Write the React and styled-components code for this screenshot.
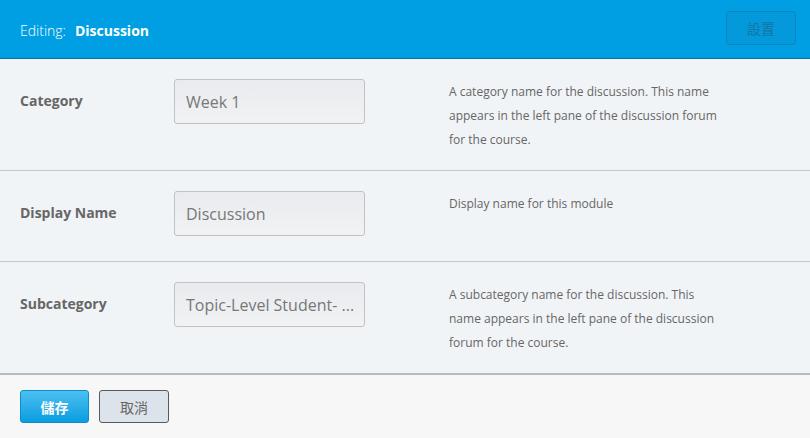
import styled, { createGlobalStyle } from "styled-components";

const GlobalStyle = createGlobalStyle`
  html, body {
    margin: 0;
    padding: 0;
    background: #f7f7f7;
  }
  body {
    font-family: "Open Sans", "Noto Sans CJK TC", sans-serif;
  }
`;

const Page = styled.div`
  width: 810px;
  height: 438px;
  display: flex;
  flex-direction: column;
  overflow: hidden;
`;

const Header = styled.div`
  height: 58px;
  background: #009fe3;
  border-bottom: 1px solid #0b6f9d;
  display: flex;
  align-items: center;
  justify-content: space-between;
  padding: 0 14px 0 20px;
  box-sizing: content-box;
`;

const Title = styled.div`
  color: #fff;
  font-size: 14px;
  font-weight: 300;
  line-height: 20px;
  padding-top: 3px;

  b {
    font-weight: 700;
    margin-left: 9px;
  }
`;

const SettingsButton = styled.button`
  width: 70px;
  height: 34px;
  margin-top: -3px;
  border: 1px solid #0f84b9;
  border-radius: 3px;
  background: #0399da;
  color: #1475a6;
  font-family: "Noto Sans CJK TC", sans-serif;
  font-size: 14px;
  padding: 0;
`;

const Body = styled.div`
  background: #f1f4f7;
  border-bottom: 2px solid #b9b9b9;
`;

const Row = styled.div`
  display: flex;
  align-items: flex-start;
  padding: 20px 20px 19px;
  border-top: ${(p) => (p.first ? "none" : "1px solid #c4c7ca")};
`;

const Label = styled.div`
  width: 154px;
  height: 42px;
  display: flex;
  align-items: center;
  color: #666;
  font-size: 14px;
  font-weight: 700;
`;

const Field = styled.div`
  height: 43px;
  margin-bottom: 6px;
  border: 1px solid #c2c2c2;
  border-radius: 3px;
  background: linear-gradient(#e9ebee, #f1f2f4);
  display: flex;
  align-items: center;
  padding: 0 11px;
  box-sizing: content-box;
  width: 167px;
  color: #777;
  font-size: 16px;
  white-space: nowrap;
  overflow: hidden;
`;

const Help = styled.div`
  margin: 1px 0 -1px 84px;
  width: 276px;
  color: #666;
  font-size: 12px;
  line-height: 24px;
`;

const Footer = styled.div`
  flex: 1;
  display: flex;
  gap: 10px;
  padding: 15px 20px 0;
  background: #f7f7f7;
`;

const Button = styled.button`
  width: ${(p) => (p.primary ? "69px" : "70px")};
  height: 33px;
  padding: 0;
  border-radius: 3px;
  font-family: "Noto Sans CJK TC", sans-serif;
  font-size: 14px;
  font-weight: ${(p) => (p.primary ? 700 : 400)};
  border: 1px solid ${(p) => (p.primary ? "#0c8ccc" : "#555a60")};
  background: ${(p) =>
    p.primary ? "linear-gradient(#4dc0f2, #0a9de0)" : "#dde3ea"};
  color: ${(p) => (p.primary ? "#fff" : "#666")};
`;

const fields = [
  {
    label: "Category",
    value: "Week 1",
    help:
      "A category name for the discussion. This name appears in the left pane of the discussion forum for the course.",
  },
  { label: "Display Name", value: "Discussion", help: "Display name for this module" },
  {
    label: "Subcategory",
    value: "Topic-Level Student- ...",
    help:
      "A subcategory name for the discussion. This name appears in the left pane of the discussion forum for the course.",
  },
];

export default function App() {
  return (
    <Page>
      <GlobalStyle />
      <Header>
        <Title>
          Editing:<b>Discussion</b>
        </Title>
        <SettingsButton>設置</SettingsButton>
      </Header>
      <Body>
        {fields.map((f, i) => (
          <Row key={f.label} first={i === 0}>
            <Label>{f.label}</Label>
            <Field>{f.value}</Field>
            <Help>{f.help}</Help>
          </Row>
        ))}
      </Body>
      <Footer>
        <Button primary>儲存</Button>
        <Button>取消</Button>
      </Footer>
    </Page>
  );
}
